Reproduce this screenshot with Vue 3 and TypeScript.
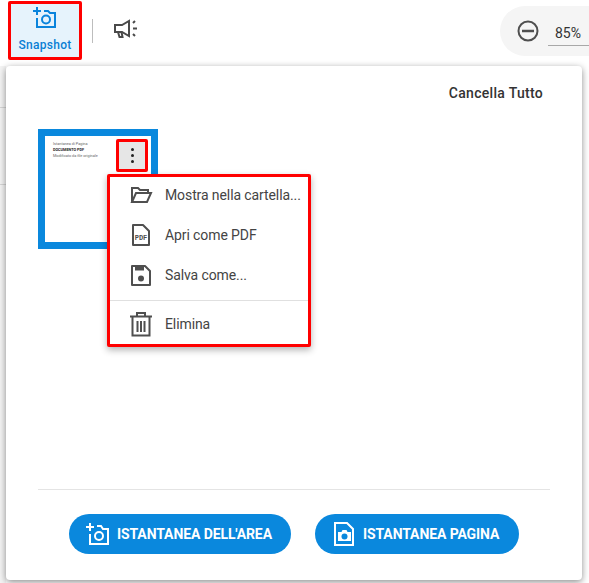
<template>
  <div class="page">
    <header class="toolbar">
      <button class="snap-tool" type="button">
        <svg class="snap-icon" width="24" height="22" viewBox="0 0 24 22" fill="none" stroke="#0a84dc" stroke-width="2">
          <path d="M0 4h8M4 0v8" />
          <path d="M4 11v9h18V6h-5l-2-2h-4" />
          <circle cx="13" cy="12.500" r="4" />
        </svg>
        <span>Snapshot</span>
      </button>
      <span class="tool-sep"></span>
      <svg class="tool-icon" width="26" height="24" viewBox="0 0 26 24" fill="none" stroke="#4a4a4a" stroke-width="2">
        <path d="M2 7h7l7-4v15l-7-4H2z" />
        <path d="M5 14l1.500 5h3l-1-5" />
        <path d="M20 5l2-2M20 10.500h4M20 16l2 2" />
      </svg>
      <div class="zoom-box">
        <svg width="22" height="22" viewBox="0 0 22 22" fill="none" stroke="#4f4f4f" stroke-width="2">
          <circle cx="11" cy="11" r="9.500" />
          <path d="M5 11h12" stroke-width="2.500" />
        </svg>
        <span class="zoom-value">85%</span>
      </div>
    </header>

    <div class="side-lines"></div>

    <section class="panel">
      <div class="panel-head">
        <span>Cancella Tutto</span>
      </div>

      <div class="snapshots">
        <div class="thumb">
          <div class="thumb-text">
            <p>Istantanea di Pagina</p>
            <p class="strong">DOCUMENTO PDF</p>
            <p>Modificato da file originale</p>
          </div>
          <button class="kebab" type="button" aria-label="Menu">
            <i></i><i></i><i></i>
          </button>
        </div>

        <div class="menu">
          <div v-for="item in menuItems" :key="item.label" class="menu-row" :class="{ split: item.split }">
            <svg width="24" height="26" viewBox="0 0 24 26" fill="none" stroke="#4f4f4f" stroke-width="2">
              <g v-if="item.icon === 'folder'">
                <path d="M3 20V6h6l2 2h8v3" />
                <path d="M3 20l4-9h15l-4 9z" />
              </g>
              <g v-else-if="item.icon === 'pdf'">
                <path d="M4 3h10l6 6v14H4z" stroke-linejoin="round" />
                <text x="12" y="18" text-anchor="middle" class="pdf-label">PDF</text>
              </g>
              <g v-else-if="item.icon === 'save'">
                <path d="M3 4h13l5 5v14H3z" stroke-linejoin="round" />
                <path d="M6 6.500h9" stroke-width="4" />
                <circle cx="12" cy="16.500" r="3" fill="#4f4f4f" stroke="none" />
              </g>
              <g v-else>
                <path d="M1 5.500h22M8 5V2h8v3" />
                <path d="M3.500 6v18.500h17V6" />
                <path d="M8.500 10v11M12 10v11M15.500 10v11" />
              </g>
            </svg>
            <span>{{ item.label }}</span>
          </div>
        </div>
      </div>

      <footer class="panel-foot">
        <button class="action area" type="button">
          <svg width="24" height="24" viewBox="0 0 24 24" fill="none" stroke="#fff" stroke-width="2">
            <path d="M1 5h8M5 1v8" />
            <path d="M5 12v10h18V7h-5l-2-3h-4" />
            <circle cx="14" cy="14" r="4" />
          </svg>
          <span>Istantanea dell'area</span>
        </button>
        <button class="action page-shot" type="button">
          <svg width="22" height="26" viewBox="0 0 22 26" fill="none" stroke="#fff" stroke-width="2">
            <path d="M2 2h12l6 6v16H2z" />
            <path d="M5 11h3.500l1-2h4l1 2H18v9H5z" fill="#fff" stroke="none" />
            <circle cx="11.500" cy="15.500" r="3" fill="#0a88dd" stroke="none" />
          </svg>
          <span>Istantanea pagina</span>
        </button>
      </footer>
    </section>
  </div>
</template>

<script setup lang="ts">
type MenuItem = {
  label: string
  icon: 'folder' | 'pdf' | 'save' | 'trash'
  split?: boolean
}

const menuItems: MenuItem[] = [
  { label: 'Mostra nella cartella...', icon: 'folder' },
  { label: 'Apri come PDF', icon: 'pdf' },
  { label: 'Salva come...', icon: 'save' },
  { label: 'Elimina', icon: 'trash', split: true },
]
</script>

<style scoped>
.page {
  position: relative;
  width: 589px;
  height: 583px;
  overflow: hidden;
  background: #fff;
  font-family: Roboto, "Liberation Sans", sans-serif;
}

.toolbar {
  display: flex;
  align-items: center;
  height: 66px;
  padding-left: 8px;
  box-sizing: border-box;
}

.snap-tool {
  display: flex;
  flex-direction: column;
  align-items: center;
  justify-content: flex-end;
  width: 74px;
  height: 59px;
  margin-top: -5px;
  padding: 0 0 5px;
  border: 3px solid #f00;
  border-radius: 2px;
  background: #e6f3fc;
  color: #0a7fd4;
  font: 500 12px Roboto, sans-serif;
  letter-spacing: 0.3px;
  box-sizing: border-box;
}

.snap-icon {
  margin-bottom: 9px;
}

.tool-sep {
  width: 1px;
  height: 24px;
  margin: -5px 20px 0 10px;
  background: #bdbdbd;
}

.tool-icon {
  margin-top: -7px;
}

.zoom-box {
  display: flex;
  align-items: center;
  gap: 9px;
  width: 89px;
  height: 50px;
  margin-left: auto;
  margin-top: -4px;
  padding-left: 17px;
  box-sizing: border-box;
  border-radius: 25px 0 0 25px;
  background: #f5f5f5;
}

.zoom-value {
  width: 41px;
  padding: 7px 0 4px 7px;
  box-sizing: border-box;
  border-bottom: 1px solid #a8a8a8;
  color: #333;
  font-size: 14px;
  margin-top: 1px;
}

.side-lines {
  position: absolute;
  left: 0;
  top: 66px;
  width: 6px;
  height: 517px;
  background:
    linear-gradient(#d6d6d6, #d6d6d6) 0 41px / 100% 1px no-repeat,
    linear-gradient(#d6d6d6, #d6d6d6) 0 118px / 100% 1px no-repeat,
    #f4f4f4;
}

.panel {
  position: relative;
  display: flex;
  flex-direction: column;
  width: 576px;
  height: 514px;
  margin-left: 6px;
  border-radius: 4px;
  box-sizing: border-box;
  padding: 0 32px;
  background: #fff;
  box-shadow: 0 2px 7px rgba(0, 0, 0, 0.45);
}

.panel-head {
  display: flex;
  justify-content: flex-end;
  padding: 19px 7px 0 0;
  color: #333;
  font-size: 14px;
  font-weight: 500;
  line-height: 16px;
  letter-spacing: 0.3px;
}

.snapshots {
  position: relative;
  flex: 1;
  padding-top: 28px;
}

.thumb {
  position: relative;
  width: 120px;
  height: 120px;
  box-sizing: border-box;
  border: 7px solid #0a88dd;
  background: #fff;
}

.thumb-text {
  padding: 5px 0 0 8px;
  font-size: 3.800px;
  line-height: 6px;
  color: #666;
  white-space: nowrap;
}

.thumb-text p {
  margin: 0;
}

.thumb-text .strong {
  color: #222;
  font-weight: 700;
}

.kebab {
  position: absolute;
  left: 71px;
  top: 3px;
  display: flex;
  flex-direction: column;
  align-items: center;
  justify-content: center;
  gap: 3px;
  width: 32px;
  height: 33px;
  padding: 0;
  border: 3px solid #f00;
  border-radius: 2px;
  background: #e6e6e6;
}

.kebab i {
  width: 3px;
  height: 3px;
  border-radius: 50%;
  background: #222;
}

.menu {
  position: absolute;
  left: 69px;
  top: 73px;
  width: 204px;
  height: 173px;
  box-sizing: border-box;
  border: 3px solid #f00;
  border-radius: 2px;
  background: #fff;
  box-shadow: 0 3px 7px rgba(0, 0, 0, 0.3);
}

.menu-row {
  display: flex;
  align-items: center;
  gap: 12px;
  height: 40px;
  padding-left: 19px;
  color: #444;
  font-size: 14px;
  letter-spacing: -0.1px;
  white-space: nowrap;
}

.menu-row:first-child {
  margin-top: -2px;
}

.menu-row.split {
  height: 44px;
  margin-top: 5px;
  padding-top: 3px;
  box-sizing: border-box;
  border-top: 1px solid #e0e0e0;
}

.pdf-label {
  font: 700 7px "Liberation Mono", monospace;
  fill: #4f4f4f;
  stroke: none;
}

.panel-foot {
  display: flex;
  justify-content: center;
  gap: 24px;
  height: 91px;
  box-sizing: border-box;
  padding-top: 24px;
  border-top: 1px solid #e4e4e4;
}

.action {
  display: flex;
  align-items: center;
  gap: 8px;
  height: 40px;
  border: 0;
  border-radius: 20px;
  background: #0a88dd;
  color: #fff;
  font: 700 14px Roboto, sans-serif;
  letter-spacing: -0.1px;
  text-transform: uppercase;
  white-space: nowrap;
}

.action.area {
  width: 222px;
  padding: 0 0 0 16px;
}

.action.page-shot {
  width: 204px;
  padding: 0 0 0 18px;
}
</style>
